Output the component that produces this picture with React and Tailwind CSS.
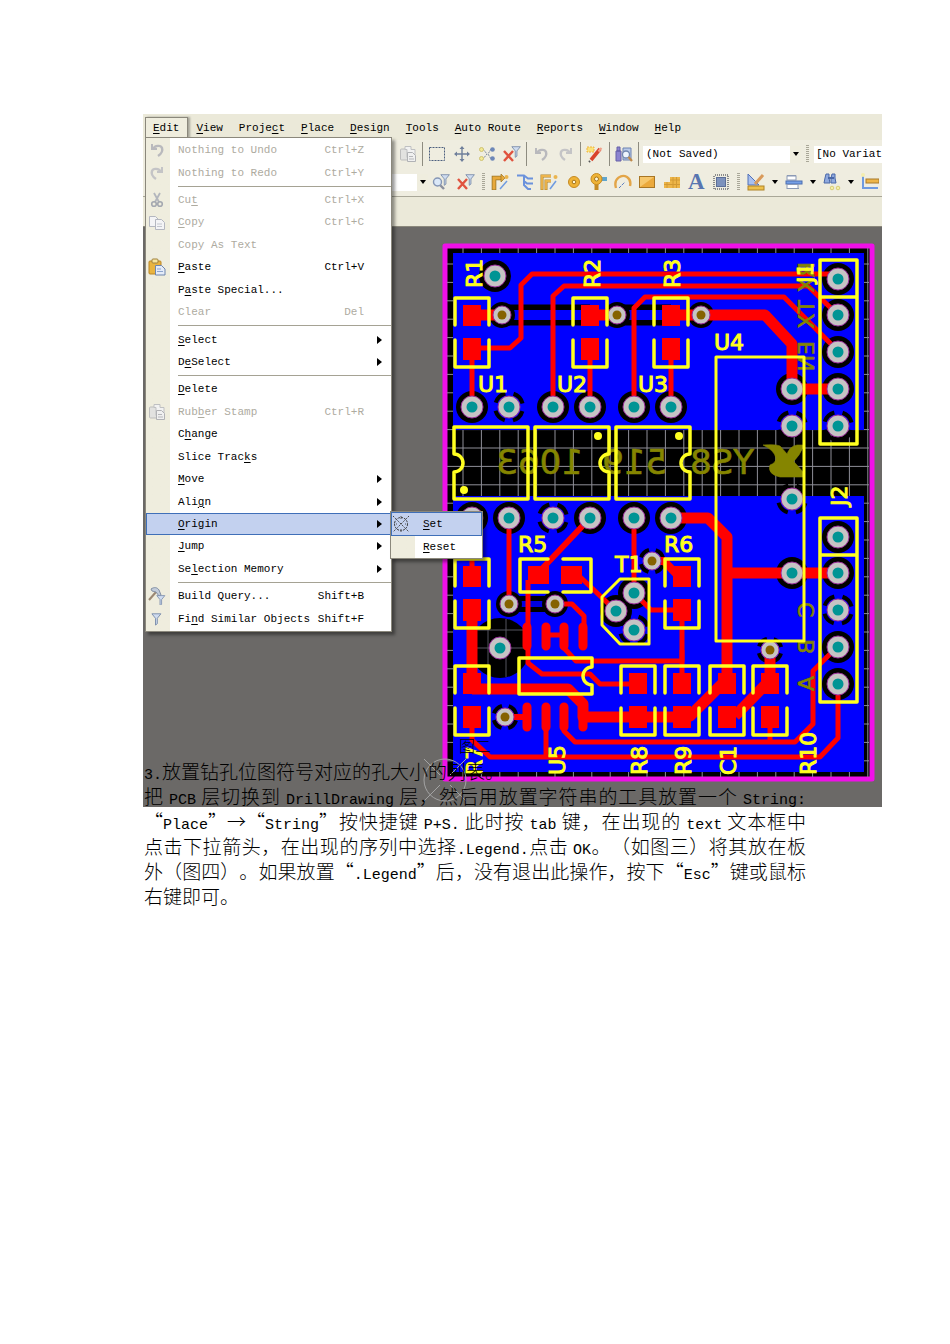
import React from 'react';

const MONO = 'font-["Liberation_Mono",monospace]';

/* ---------- icons ---------- */

const Svg = ({ children, size = 'w-[18px] h-[18px]' }) => (
  <svg viewBox="0 0 18 18" className={size} fill="none" aria-hidden="true">{children}</svg>
);

const UndoIcon = () => (
  <Svg>
    <path d="M4 3v5h5" stroke="#b9b9bd" strokeWidth="2" />
    <path d="M5 8c2-4 8-4 9-1 1 3-1 6-4 8" stroke="#b9b9bd" strokeWidth="2.4" />
  </Svg>
);

const RedoIcon = () => (
  <Svg>
    <path d="M14 3v5h-5" stroke="#c4c4c6" strokeWidth="2" />
    <path d="M13 8c-2-4-8-4-9-1-1 3 1 6 4 8" stroke="#c4c4c6" strokeWidth="2.4" />
  </Svg>
);

const CutIcon = () => (
  <Svg>
    <path d="M6 2l5 9M12 2l-5 9" stroke="#b3b6bd" strokeWidth="1.8" />
    <circle cx="6" cy="13" r="2.3" stroke="#a4a8b0" strokeWidth="1.6" />
    <circle cx="12" cy="13" r="2.3" stroke="#a4a8b0" strokeWidth="1.6" />
  </Svg>
);

const CopyIcon = () => (
  <Svg>
    <path d="M1.500 3.500h6l3 3v7h-9z" fill="#f4f4f6" stroke="#b4b7c0" />
    <path d="M7.500 6.500h6l3 3v7h-9z" fill="#f4f4f6" stroke="#b4b7c0" />
    <path d="M9 11h5M9 13.500h5" stroke="#c3c6ce" />
  </Svg>
);

const PasteIcon = () => (
  <Svg>
    <rect x="1" y="3" width="12" height="13" rx="1" fill="#e9b440" stroke="#b98526" />
    <rect x="4" y="1" width="6" height="4" rx="1" fill="#f8e6a0" stroke="#9f803c" />
    <path d="M7.500 7.500h6l3.500 3.500v6h-9.500z" fill="#e4ebf8" stroke="#6f85ad" />
    <path d="M9 11h4M9 13.500h6" stroke="#8da4cd" />
  </Svg>
);

const StampIcon = () => (
  <Svg>
    <rect x="1.500" y="4" width="10" height="11" rx="1" fill="#e2e2e0" stroke="#bdbdbd" />
    <path d="M6 1.500h6v3h4v8h-8v-8h-2z" fill="#f2f2f2" stroke="#bfc0c2" />
    <path d="M8.500 7.500h5l3 3v6h-8z" fill="#f0f0f0" stroke="#b1b2b5" />
    <path d="M10 11.500h4M10 14h5" stroke="#b6b7ba" />
  </Svg>
);

const Funnel = () => (
  <path d="M1 2h10l-4 5v6l-2 1.500v-7.500z" fill="#cfdcf0" stroke="#7689a8" />
);

const FilterIcon = () => (
  <Svg><g transform="translate(3 2) scale(.9)"><Funnel /></g></Svg>
);

const BuildIcon = () => (
  <Svg>
    <path d="M1 13l7-8" stroke="#9b8873" strokeWidth="2" />
    <path d="M3 2c3-2 6-2 8 1l2 5-2 1-3-4-4-1z" fill="#c3ccda" stroke="#8390a4" />
    <g transform="translate(8 7) scale(.8)"><Funnel /></g>
  </Svg>
);

const OriginIcon = () => (
  <Svg>
    <circle cx="9" cy="9" r="6.500" stroke="#333" strokeDasharray="2 1" />
    <path d="M1 1l16 16M17 1L1 17" stroke="#444" strokeDasharray="1.500 1" />
    <path d="M2 9h3M13 9h3M9 1v3M9 14v3" stroke="#555" strokeDasharray="1 1" />
  </Svg>
);

const MarqueeIcon = () => (
  <Svg><rect x="1.500" y="2.500" width="15" height="13" stroke="#4c5f7e" strokeDasharray="2 1" /></Svg>
);

const MoveIcon = () => (
  <Svg>
    <path d="M9 2v14M2 9h14" stroke="#6f7f9b" strokeWidth="1.400" />
    <path d="M9 1l2.500 3h-5zM9 17l2.500-3h-5zM1 9l3-2.500v5zM17 9l-3-2.500v5z" fill="#6f7f9b" />
  </Svg>
);

const ShuffleIcon = () => (
  <Svg>
    <path d="M5 4l4 5-4 5M13 4l-3 5 3 5" stroke="#7c879b" strokeDasharray="2 1" />
    <circle cx="3.500" cy="4.500" r="2" fill="#f3e992" stroke="#cfc272" />
    <circle cx="3.500" cy="13.500" r="2" fill="#f3e992" stroke="#cfc272" />
    <circle cx="14.500" cy="4.500" r="2.300" fill="#6d87b8" />
    <circle cx="14.500" cy="13.500" r="2.300" fill="#6d87b8" />
  </Svg>
);

const ClearFilterIcon = () => (
  <Svg>
    <g transform="translate(8 0) scale(.85)"><Funnel /></g>
    <path d="M1 6l9 10M10 6L1 16" stroke="#e0533f" strokeWidth="2.400" />
  </Svg>
);

const ZoomFilterIcon = () => (
  <Svg>
    <g transform="translate(8 0) scale(.85)"><Funnel /></g>
    <path d="M8 12l4 4" stroke="#8a8f9c" strokeWidth="2.400" />
    <circle cx="5.500" cy="9" r="4" fill="#dbe8f8" stroke="#8596b5" strokeWidth="1.400" />
  </Svg>
);

const WandIcon = () => (
  <Svg>
    <path d="M1 2h7v5H1z" fill="#fbe27a" stroke="#f0b43e" strokeDasharray="2 1" />
    <path d="M14 4L5 15" stroke="#d9442c" strokeWidth="3.600" />
    <path d="M15.500 3l-3 3.500" stroke="#f0a18a" strokeWidth="2" />
    <path d="M4 16l-1 1" stroke="#555" strokeWidth="2" />
  </Svg>
);

const InspectIcon = () => (
  <Svg>
    <path d="M1 6h5v10H1zM2 2h3v4H2z" fill="#8c84d0" stroke="#6760a8" />
    <path d="M8 3h8v12H8z" fill="#b9c9e8" stroke="#6c82b1" />
    <circle cx="11" cy="9.500" r="3.500" fill="#eef5fd" stroke="#7187ae" strokeWidth="1.300" />
    <path d="M13.500 12l3.500 4" stroke="#c08a4a" strokeWidth="2.200" />
  </Svg>
);

const RouteIcon = () => (
  <Svg>
    <path d="M3 17V5h8" stroke="#9a7426" strokeWidth="4.600" />
    <path d="M3 16.500V5h8" stroke="#e8a93b" strokeWidth="3" />
    <path d="M10 1l4 4-4 4z" fill="#e8a93b" stroke="#9a7426" strokeWidth=".700" />
    <path d="M9 16l7-8" stroke="#6f9be0" strokeWidth="1.500" />
    <circle cx="15.500" cy="4" r="2" fill="#eab54f" />
  </Svg>
);

const MultiRouteIcon = () => (
  <Svg>
    <path d="M1 2.500h7l4 3h5M8 3v5l3 2.500h6M8 8v4l4 4h3" stroke="#6b92dc" strokeWidth="2" />
  </Svg>
);

const DiffRouteIcon = () => (
  <Svg>
    <path d="M2 17V3h9M6 17V8h5" stroke="#b08428" strokeWidth="3" />
    <path d="M2 16.500V3h9M6 16.500V8h5" stroke="#edb44b" strokeWidth="1.800" />
    <path d="M10 16l6-8" stroke="#6f9be0" strokeWidth="1.500" />
    <circle cx="15.500" cy="4" r="2" fill="#eab54f" />
  </Svg>
);

const PadIcon = () => (
  <Svg>
    <circle cx="9" cy="9" r="5.500" fill="#efb336" stroke="#c58a22" />
    <circle cx="9" cy="9" r="1.800" fill="#fff7d8" stroke="#a3741e" />
  </Svg>
);

const ViaIcon = () => (
  <Svg>
    <path d="M9 6h9" stroke="#5fa6cf" strokeWidth="4" />
    <path d="M7.500 8v9" stroke="#c58a22" strokeWidth="4" />
    <circle cx="7.500" cy="6" r="5.500" fill="#efb336" stroke="#c58a22" />
    <circle cx="7.500" cy="6" r="2" fill="#fff7d8" stroke="#a3741e" />
  </Svg>
);

const ArcIcon = () => (
  <Svg>
    <path d="M2 15C-1 5 8 1 13 4c3 2 4 5 3 9" stroke="#e3a548" strokeWidth="2.400" />
    <path d="M5 15l6-6" stroke="#5f7fc0" strokeDasharray="3 1" />
  </Svg>
);

const FillIcon = () => (
  <Svg>
    <rect x="1.500" y="3.500" width="15" height="11" fill="#eba93c" stroke="#a87624" />
    <path d="M2 14L16 4H2z" fill="#f6c76c" />
  </Svg>
);

const PolygonIcon = () => (
  <Svg>
    <path d="M1 9h6V4h10v11H1z" fill="#edb548" />
    <path d="M7 7h10M1 11.500h16M10 4v11M13.500 4v11M4 9v6" stroke="#d29a34" />
  </Svg>
);

const LetterIcon = () => (
  <span className='font-["Liberation_Serif",serif] text-[23px] leading-[18px] font-bold text-[#5875b0]'>A</span>
);

const ChipIcon = () => (
  <Svg>
    <rect x="4.500" y="4.500" width="9" height="9" fill="#7d92bd" stroke="#5d6f98" />
    <path d="M3 2h13M3 16h13M2 3v13M16 3v13" stroke="#8a8a8a" strokeWidth="2" strokeDasharray="1 1" />
  </Svg>
);

const DraftIcon = () => (
  <Svg>
    <path d="M1 1v11h11z" fill="#a9c0ee" stroke="#5170b8" />
    <path d="M8 11l8-9" stroke="#d99a5a" strokeWidth="3" />
    <rect x="1" y="13" width="16" height="4" fill="#eec14c" stroke="#b08327" />
  </Svg>
);

const AlignIcon = () => (
  <Svg>
    <path d="M2 2.500h9M2 15.500h12" stroke="#8c9ab5" />
    <rect x="2" y="3" width="9" height="4" fill="#fff" stroke="#8c9ab5" />
    <rect x="1" y="8" width="16" height="3" fill="#76a0e6" stroke="#4c6fb2" />
    <rect x="2" y="11.500" width="11" height="4" fill="#fff" stroke="#8c9ab5" />
  </Svg>
);

const FindIcon = () => (
  <Svg>
    <path d="M3 1h3v4l1 5H1l1-5zM9 1h3v4l1 5H8V5z" fill="#8fa9de" stroke="#4a68a8" />
    <path d="M5 5h6" stroke="#4a68a8" strokeWidth="2" />
    <circle cx="9" cy="15" r="1.800" fill="#f6efa8" stroke="#d8cd74" />
    <circle cx="15" cy="15" r="1.800" fill="#f6efa8" stroke="#d8cd74" />
  </Svg>
);

const DimensionIcon = () => (
  <Svg>
    <path d="M2 2v13h15" stroke="#6e9ae0" strokeWidth="2" />
    <rect x="5" y="6" width="13" height="4" fill="#edb548" stroke="#a87a2a" />
    <circle cx="2" cy="2" r="2" fill="#f4edae" />
  </Svg>
);

/* ---------- menus ---------- */

// "&" stands before the access key
const Label = ({ text }) => {
  const i = text.indexOf('&');
  if (i < 0) return text;
  return (
    <>
      {text.slice(0, i)}
      <span className="underline underline-offset-2">{text[i + 1]}</span>
      {text.slice(i + 2)}
    </>
  );
};

const menus = ['&View', 'Proje&ct', '&Place', '&Design', '&Tools', '&Auto Route', '&Reports', '&Window', '&Help'];

const editMenu = [
  { text: 'Nothing to Undo', keys: 'Ctrl+Z', icon: <UndoIcon />, off: true },
  { text: 'Nothing to Redo', keys: 'Ctrl+Y', icon: <RedoIcon />, off: true },
  null,
  { text: 'Cu&t', keys: 'Ctrl+X', icon: <CutIcon />, off: true },
  { text: '&Copy', keys: 'Ctrl+C', icon: <CopyIcon />, off: true },
  { text: 'Copy As Text', off: true },
  { text: '&Paste', keys: 'Ctrl+V', icon: <PasteIcon /> },
  { text: 'P&aste Special...' },
  { text: 'Clear', keys: 'Del', off: true },
  null,
  { text: '&Select', sub: true },
  { text: 'D&eSelect', sub: true },
  null,
  { text: '&Delete' },
  { text: 'Rub&ber Stamp', keys: 'Ctrl+R', icon: <StampIcon />, off: true },
  { text: 'C&hange' },
  { text: 'Slice Trac&ks' },
  { text: '&Move', sub: true },
  { text: 'Ali&gn', sub: true },
  { text: '&Origin', sub: true, open: true },
  { text: '&Jump', sub: true },
  { text: 'Se&lection Memory', sub: true },
  null,
  { text: 'Build Query...', keys: 'Shift+B', icon: <BuildIcon /> },
  { text: 'Fi&nd Similar Objects', keys: 'Shift+F', icon: <FilterIcon /> },
];

const MenuItem = ({ item }) => (
  <div className="relative flex grow basis-0">
    <button
      type="button"
      disabled={item.off}
      className={`flex w-full items-center border pr-2 text-left whitespace-pre ${item.open ? 'border-[#3f6fb8] bg-[#c3d1ef]' : 'border-transparent'} ${item.off ? 'text-[#aeab9f]' : 'text-black'}`}
    >
      <span className="flex w-[31px] shrink-0 pl-px">{item.icon}</span>
      <span className="grow"><Label text={item.text} /></span>
      {item.keys && <span className="mr-[18px]">{item.keys}</span>}
      {item.sub && <svg viewBox="0 0 5 8" className="h-2 w-[5px]"><path d="M0 0l5 4-5 4z" /></svg>}
    </button>
    {item.open && <OriginMenu />}
  </div>
);

const OriginMenu = () => (
  <div className="absolute top-[-2px] left-full z-10 -ml-px flex w-[93px] flex-col border border-[#8b887c] bg-linear-to-r from-[#efedde] from-[24px] to-white to-[24px] shadow-[3px_3px_3px_rgba(0,0,0,0.4)]">
    <button type="button" className="flex h-6 items-center border border-[#3f6fb8] bg-[#c3d1ef] text-left">
      <span className="w-[31px]"><OriginIcon /></span>
      <Label text="&Set" />
    </button>
    <button type="button" className="flex h-[22px] items-center border border-transparent pl-[31px] text-left">
      <Label text="&Reset" />
    </button>
  </div>
);

const EditMenu = () => (
  <div className="absolute top-[23px] left-[2px] z-10 flex h-[495px] w-[247px] flex-col border border-[#8b887c] bg-linear-to-r from-[#efedde] from-[24px] to-white to-[24px] py-px shadow-[3px_3px_3px_rgba(0,0,0,0.4)]">
    {editMenu.map((item, i) =>
      item ? <MenuItem key={i} item={item} /> : <hr key={i} className="my-[2px] ml-8 border-[#a5a294]" />
    )}
  </div>
);

/* ---------- toolbars ---------- */

const Tool = ({ label, children }) => (
  <button type="button" aria-label={label} className="flex w-[25px] shrink-0 items-center justify-center">{children}</button>
);

const Divider = () => <span className="mr-px ml-px h-6 w-[2px] shrink-0 border-r border-[#8e8c80]" />;

const Grip = () => (
  <span className="h-[18px] w-[3px] bg-[repeating-linear-gradient(#a9a798_0_1px,transparent_1px_2px)]" />
);

const Caret = () => (
  <svg viewBox="0 0 6 4" className="h-1 w-[6px] shrink-0"><path d="M0 0h6l-3 4z" /></svg>
);

const MainToolbar = () => (
  <div className="flex h-[28px] items-center overflow-hidden pl-[252px]">
    <Tool label="Rubber stamp"><StampIcon /></Tool>
    <Divider />
    <Tool label="Select inside area"><MarqueeIcon /></Tool>
    <Tool label="Move selection"><MoveIcon /></Tool>
    <Tool label="Deselect all"><ShuffleIcon /></Tool>
    <Tool label="Clear filter"><ClearFilterIcon /></Tool>
    <Divider />
    <Tool label="Undo"><UndoIcon /></Tool>
    <Tool label="Redo"><RedoIcon /></Tool>
    <Divider />
    <Tool label="Wizard"><WandIcon /></Tool>
    <Divider />
    <Tool label="Browse components"><InspectIcon /></Tool>
    <Divider />
    <div className="relative ml-[3px] flex h-[17px] w-[158px] shrink-0 items-center bg-white">
      <select aria-label="View" className="h-full w-full appearance-none pl-[3px]"><option>(Not Saved)</option></select>
      <span className="pointer-events-none absolute right-0 flex h-full w-[11px] items-center justify-center bg-[#efedde]"><Caret /></span>
    </div>
    <span className="flex w-[13px] shrink-0 justify-center"><Grip /></span>
    <select aria-label="Variant" className="h-[17px] min-w-0 grow basis-0 appearance-none bg-white pl-[2px]"><option>[No Variations]</option></select>
  </div>
);

const placeTools = [
  ['Route', RouteIcon], ['Multi route', MultiRouteIcon], ['Differential route', DiffRouteIcon],
  ['Pad', PadIcon], ['Via', ViaIcon], ['Arc', ArcIcon], ['Fill', FillIcon],
  ['Polygon', PolygonIcon], ['Text', LetterIcon], ['Component', ChipIcon],
];

const utilityTools = [['Drafting', DraftIcon], ['Align', AlignIcon], ['Find', FindIcon], ['Dimension', DimensionIcon]];

const PlaceToolbar = () => (
  <div className="flex h-[29px] items-center overflow-hidden border-b border-[#a9a798] pl-[249px]">
    <div className="relative flex h-[17px] w-[36px] shrink-0 items-center bg-white">
      <select aria-label="Filter" className="h-full w-full appearance-none"><option></option></select>
      <span className="pointer-events-none absolute right-0 flex h-full w-[11px] items-center justify-center bg-[#efedde]"><Caret /></span>
    </div>
    <Tool label="Zoom filter"><ZoomFilterIcon /></Tool>
    <Tool label="Clear filter"><ClearFilterIcon /></Tool>
    <span className="flex w-[10px] shrink-0 justify-center"><Grip /></span>
    <div className="flex w-[245px] shrink-0">
      {placeTools.map(([label, Icon]) => (
        <button key={label} type="button" aria-label={label} className="flex grow basis-0 items-center justify-center"><Icon /></button>
      ))}
    </div>
    <span className="flex w-[11px] shrink-0 justify-center"><Grip /></span>
    {utilityTools.map(([label, Icon]) => (
      <button key={label} type="button" aria-label={label} className="flex w-[38px] shrink-0 items-center gap-[3px] pl-[3px]">
        <span className="w-[22px]"><Icon /></span>
        <Caret />
      </button>
    ))}
  </div>
);

/* ---------- board ---------- */

const RED = '#ff0000';
const YELLOW = '#ffff20';

const thin = [
  'M472 348H510L521 338V285L532 274H838',
  'M553 407V296L564 286H808L838 315',
  'M634 407V308L645 297H784L838 351',
  'M472 350V400', 'M590 350V400', 'M671 350V400',
  'M472 517V570', 'M509 517V604', 'M634 517V593L651 610H682',
  'M528 580V663L542 674H590L600 684H638',
  'M616 611L576 573', 'M555 604H572L584 616V630', 'M546 635H564',
  'M564 645V648L576 661H682V610', 'M682 650V690',
  'M472 720V740L490 757H820L838 738V684',
  'M546 720V757', 'M564 720V731L575 742H795L813 724V671L838 646', 'M770 720V742',
];

const thick = [
  'M472 315H502', 'M590 315H617', 'M671 315H765L792 344V389H838',
  'M671 518H708L727 537V684', 'M727 573H838',
  'M472 610V684', 'M472 689H568L583 704V717H682L690 716L722 684', 'M735 716L766 684', 'M770 650V684',
];

const pads = [
  [472, 407], [553, 407], [590, 407], [634, 407], [671, 407],
  [472, 518], [509, 518], [590, 518], [634, 518], [671, 518],
  [495, 276], [838, 279], [838, 315], [838, 352], [838, 389],
  [792, 389], [792, 573], [838, 537], [838, 573], [838, 647], [838, 684],
  [616, 611], [634, 593],
];
const reliefPads = [[509, 407], [553, 518], [838, 426], [792, 426], [792, 499], [838, 610], [634, 630]];
const vias = [[502, 315], [617, 315], [701, 315], [509, 604], [555, 604]];
const reliefVias = [[652, 561], [505, 717], [770, 650]];

// centre x, top y of two-pad parts
const chips = [
  [472, 299], [590, 299], [671, 299], [472, 560], [682, 560],
  [472, 667], [638, 667], [682, 667], [727, 667], [770, 667],
];

const flatLabels = [
  ['U1', 478, 392], ['U2', 557, 392], ['U3', 638, 392], ['U4', 714, 350],
  ['R5', 518, 552], ['R6', 664, 552], ['T1', 615, 572],
];
const sideLabels = [
  ['R1', 482, 288], ['R2', 600, 288], ['R3', 680, 288], ['J1', 813, 283], ['J2', 847, 506],
  ['R7', 482, 775], ['U5', 565, 775], ['R8', 647, 775], ['R9', 691, 775], ['C1', 736, 775], ['R10', 816, 775],
];
const mirrored = [['YS8', 754], ['519', 667], ['1063', 583]];
const mirroredSide = [['RX', 262], ['TX', 300], ['EN', 341], ['C', 602], ['B', 639], ['A', 676]];

const range = (from, to, step) => {
  const out = [];
  for (let v = from; v < to; v += step) out.push(v);
  return out;
};

const Grid = () => (
  <g stroke="#8f8f98" strokeWidth="1">
    {range(463, 869, 18.4).map((x) => <path key={x} d={`M${x} 248V777`} />)}
    {range(264, 777, 18.4).map((y) => <path key={y} d={`M447 ${y}H869`} />)}
  </g>
);

const Pad = ({ x, y, via }) => (
  <g>
    <circle cx={x} cy={y} r={via ? 9 : 11} fill="#c6c4c4" stroke="#9a2c9a" />
    <circle cx={x} cy={y} r={via ? 4.5 : 5.5} fill={via ? '#856200' : '#009494'} />
  </g>
);

const Halo = ({ x, y, via }) => <circle cx={x} cy={y} r={via ? 13 : 16} fill="#000" />;

const Relief = ({ x, y, via }) => {
  const r = via ? 11.5 : 14;
  const q = (Math.PI * r) / 2;
  return (
    <circle cx={x} cy={y} r={r} stroke="#000" strokeWidth="4" fill="none" strokeDasharray={`${q * 0.62} ${q * 0.38}`} strokeDashoffset={-q * 0.19} />
  );
};

const Board = () => (
  <svg viewBox="400 227 482 580" className="block w-[482px]" role="img" aria-label="PCB layout">
    <rect x="445" y="246" width="427" height="533" fill="#000" stroke="#f010e8" strokeWidth="5" strokeLinejoin="round" />
    <Grid />
    <path d="M453 253H864V430H453zM453 496H864V772H453z" fill="#0000ff" />
    <circle cx="500" cy="648" r="30" fill="#000" />
    <path d="M488 619V675M506 619V677M472 648H528M474 630H524" stroke="#55555f" />

    <g fill="none">
      <path d="M502 315H590M617 315H671" stroke="#000" strokeWidth="21" />
      <path d="M502 315H590M617 315H671" stroke="#0000ff" strokeWidth="10" />
      <path d="M509 604H555" stroke="#000" strokeWidth="16" />
      <path d="M509 604H555" stroke="#0000e0" strokeWidth="6" />
    </g>
    {pads.map(([x, y]) => <Halo key={`${x}-${y}`} x={x} y={y} />)}
    {vias.map(([x, y]) => <Halo key={`${x}-${y}`} x={x} y={y} via />)}
    {reliefPads.map(([x, y]) => <Relief key={`${x}-${y}`} x={x} y={y} />)}
    {reliefVias.map(([x, y]) => <Relief key={`${x}-${y}`} x={x} y={y} via />)}

    <g fill="none" stroke={RED} strokeLinejoin="round">
      {thin.map((d) => <path key={d} d={d} strokeWidth="5" />)}
      {thick.map((d) => <path key={d} d={d} strokeWidth="11" />)}
      <path d="M590 518L538 573" strokeWidth="6" />
      <path d="M652 561H664L682 580" strokeWidth="8" />
      <path d="M505 717H527" strokeWidth="6" />
      {[527, 546, 564, 583].map((x) => (
        <path key={x} d={`M${x} 627V646M${x} 707V727`} strokeWidth="9" strokeLinecap="round" />
      ))}
    </g>
    <g fill={RED}>
      {chips.map(([x, y]) => (
        <path key={`${x}-${y}`} d={`M${x - 9} ${y + 6}h18v21h-18zM${x - 9} ${y + 39}h18v22h-18z`} />
      ))}
      <path d="M528 566h21v18h-21zM561 566h21v18h-21z" />
    </g>

    <g fill="#858500" stroke="#858500" strokeWidth=".600" className='font-["DejaVu_Sans",sans-serif]'>
      {mirrored.map(([text, x]) => (
        <text key={text} transform={`translate(${x} 474) scale(-1 1)`} fontSize="34">{text}</text>
      ))}
      {mirroredSide.map(([text, y]) => (
        <text key={text} transform={`translate(814 ${y}) rotate(-90) scale(-1 1)`} fontSize="22">{text}</text>
      ))}
      <path d="M763 445Q775 444 780 446L804 473V477H780Q767 474 770 465Q776 463 776 458Q774 450 763 445ZM786 457Q789 446 797 445H804Q800 456 792 463Z" />
    </g>

    {pads.map(([x, y]) => <Pad key={`${x}-${y}`} x={x} y={y} />)}
    {reliefPads.map(([x, y]) => <Pad key={`${x}-${y}`} x={x} y={y} />)}
    {vias.map(([x, y]) => <Pad key={`${x}-${y}`} x={x} y={y} via />)}
    {reliefVias.map(([x, y]) => <Pad key={`${x}-${y}`} x={x} y={y} via />)}
    <Pad x={500} y={648} />

    <g fill="none" stroke={YELLOW} strokeWidth="3.500" strokeLinejoin="round" strokeLinecap="round">
      {chips.map(([x, y]) => (
        <path key={`${x}-${y}`} d={`M${x - 17} ${y + 26}V${y - 1}H${x + 17}V${y + 26}M${x - 17} ${y + 41}V${y + 68}H${x + 17}V${y + 41}`} />
      ))}
      <path d="M548 559H520V592H548M563 559H591V592H563" />
      <path d="M454 427H528V499H454V472A9 9 0 0 0 454 454Z" />
      <path d="M535 427H609V454A9 9 0 0 0 609 472V499H535Z" />
      <path d="M616 427H690V454A9 9 0 0 0 690 472V499H616Z" />
      <path d="M519 658H592V667A9 9 0 0 0 592 685V694H519Z" />
      <path d="M716 357H804V641H716Z" strokeWidth="3" />
      <path d="M820 260H857V444H820ZM820 297H857M820 518H857V702H820ZM820 555H857" />
      <path d="M620 579H649V644H620L602 625V597Z" strokeWidth="3" />
    </g>
    <g fill={YELLOW}>
      <circle cx="464" cy="490" r="4" />
      <circle cx="598" cy="436" r="4" />
      <circle cx="679" cy="436" r="4" />
    </g>
    <g fill={YELLOW} stroke={YELLOW} fontSize="22" className='font-["DejaVu_Sans",sans-serif]'>
      {flatLabels.map(([text, x, y]) => <text key={text} x={x} y={y}>{text}</text>)}
      {sideLabels.map(([text, x, y]) => (
        <text key={text} transform={`translate(${x} ${y}) rotate(-90)`}>{text}</text>
      ))}
    </g>

    {/* origin marker */}
    <g fill="none" stroke="#a3a3a3">
      <circle cx="445" cy="780" r="21" />
      <path d="M424 759L440 775M450 785L466 801M466 759L450 775M440 785L424 801" />
    </g>
  </svg>
);

/* ---------- document ---------- */

const lines = [
  '把 PCB 层切换到 DrillDrawing 层，然后用放置字符串的工具放置一个 String:',
  '“Place”→“String”按快捷键 P+S. 此时按 tab 键，在出现的 text 文本框中',
  '点击下拉箭头，在出现的序列中选择.Legend.点击 OK。（如图三）将其放在板',
  '外（图四）。如果放置“.Legend”后，没有退出此操作，按下“Esc”键或鼠标',
];

// Latin runs are set in the half-width face
const Mixed = ({ text }) =>
  text.split(/([!-~]+)/).map((part, i) =>
    i % 2 ? <span key={i} className='font-["Liberation_Mono",monospace] text-[15px] leading-none'>{part}</span> : part
  );

const App = () => {
  return (
    <main lang="zh-CN" className="min-h-[1344px] bg-white pt-[114px] text-black">
      <section className={`relative mr-[68px] ml-[143px] bg-[#ebe9d9] text-[11px] leading-4 ${MONO}`}>
        <nav className="flex h-[26px] items-start gap-4 pl-[2px] whitespace-pre">
          <button type="button" className="mt-[3px] -mr-2 h-[21px] border border-b-0 border-[#8b887c] bg-[#efedde] pr-2 pl-[7px] shadow-[2px_0_2px_rgba(0,0,0,0.3)]">
            <Label text="&Edit" />
          </button>
          {menus.map((m) => (
            <button key={m} type="button" className="mt-[3px] h-[21px]"><Label text={m} /></button>
          ))}
        </nav>
        <EditMenu />
        <div className="bg-[#efede0]">
          <MainToolbar />
          <PlaceToolbar />
        </div>
        <div className="h-[30px] border-b border-[#8b887c]" />
        <div className="flex justify-end overflow-hidden bg-[#6b6967]">
          <Board />
        </div>
      </section>

      <article className='relative -mt-[74px] mr-[144px] ml-[144px] font-["Noto_Sans_CJK_SC",sans-serif] text-[19px] leading-[25px] font-light [text-spacing-trim:space-all]'>
        <p className="text-center text-[16px] leading-[25px]">图二</p>
        <p><Mixed text="3.放置钻孔位图符号对应的孔大小的列表。" /></p>
        {lines.map((line) => (
          <p key={line} className="[text-align-last:justify]"><Mixed text={line} /></p>
        ))}
        <p>右键即可。</p>
      </article>
    </main>
  );
};

export default App;
